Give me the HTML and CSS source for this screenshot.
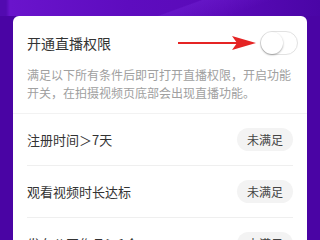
FILE: index.html
```html
<!DOCTYPE html>
<html lang="zh">
<head>
<meta charset="utf-8">
<link rel="stylesheet" href="styles.css">
</head>
<body>
<div class="bg">
  <div class="card">
    <div class="head">
      <span class="title">开通直播权限</span>
      <span class="toggle"><span class="knob"></span></span>
      <svg class="arrow" width="80" height="18" viewBox="0 0 80 18">
        <line x1="0" y1="9" x2="62" y2="9" stroke="#e52424" stroke-width="2.2"/>
        <path d="M54 2 L78 9 L54 16 L59 9 Z" fill="#e52424"/>
      </svg>
    </div>
    <p class="desc">满足以下所有条件后即可打开直播权限，开启功能开关，在拍摄视频页底部会出现直播功能。</p>
    <div class="sep"></div>
    <div class="row"><span class="label">注册时间＞7天</span><span class="badge">未满足</span></div>
    <div class="row"><span class="label">观看视频时长达标</span><span class="badge">未满足</span></div>
    <div class="row"><span class="label">发布公开作品≥1个</span><span class="badge">未满足</span></div>
  </div>
</div>
</body>
</html>
```
FILE: styles.css
```css
html, body {
  margin: 0;
  padding: 0;
  width: 320px;
  height: 240px;
  overflow: hidden;
}
.bg {
  width: 320px;
  height: 240px;
  padding: 16px 13px 0 13px;
  box-sizing: border-box;
  background:
    linear-gradient(160deg, rgba(120,40,220,0) 55%, rgba(120,40,220,0.35) 56%, rgba(120,40,220,0) 75%) top / 100% 16px no-repeat,
    linear-gradient(90deg, #520ab0 0px, #520ab0 6px, #6a14cc 10px, #5e0cbf 40%, #5a0ab8 70%, #4a05a6 100%) top / 100% 16px no-repeat,
    linear-gradient(90deg, #4a04a4 0%, #4a04a4 100%);
  font-family: "Noto Sans CJK SC", "Noto Sans", sans-serif;
}
.card {
  background: #fff;
  border-radius: 6px 6px 0 0;
  height: 240px;
}
.head {
  position: relative;
  display: flex;
  align-items: center;
  justify-content: space-between;
  padding: 15px 9px 0 14px;
  height: 24px;
}
.title {
  font-size: 14px;
  color: #333;
  line-height: 24px;
}
.toggle {
  position: relative;
  width: 38px;
  height: 24px;
  box-sizing: border-box;
  border: 1px solid #e2e2e2;
  border-radius: 12px;
  background: #fff;
}
.knob {
  position: absolute;
  left: 0;
  top: 0;
  width: 22px;
  height: 22px;
  border-radius: 50%;
  background: #fff;
  box-shadow: 0 1px 2px rgba(0,0,0,0.35);
}
.arrow {
  position: absolute;
  left: 165px;
  top: 18px;
}
.desc {
  margin: 11px 12px 0 14px;
  font-size: 12px;
  line-height: 18px;
  color: #a0a0a0;
  height: 36px;
  padding-bottom: 11px;
}
.sep {
  height: 1px;
  background: #f2f2f2;
}
.row {
  display: flex;
  align-items: center;
  justify-content: space-between;
  height: 51px;
  margin: 0 14px 0 14px;
  border-bottom: 1px solid #efefef;
}
.label {
  font-size: 13px;
  color: #333;
}
.badge {
  width: 56px;
  height: 23px;
  line-height: 23px;
  text-align: center;
  border-radius: 12px;
  background: #f3f3f3;
  color: #444;
  font-size: 12px;
}
```
